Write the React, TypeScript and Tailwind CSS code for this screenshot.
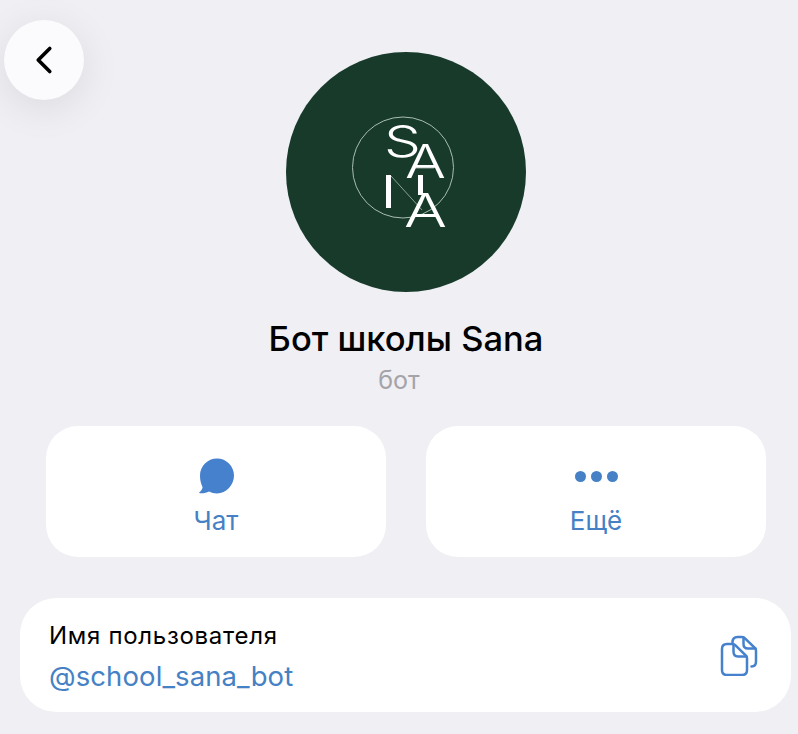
import React from 'react';
import { ChevronLeft } from 'lucide-react';

const SanaLogo = () => (
  <svg viewBox="0 0 150 150" className="w-[150px] h-[150px]" fill="none">
    <g transform="translate(-1 3)">
      <circle cx="73" cy="67.5" r="50.5" stroke="#a9bdb3" strokeWidth="1" />
      <line x1="61" y1="76" x2="92" y2="110" stroke="#a9bdb3" strokeWidth="0.8" />
      <line x1="84" y1="68" x2="104" y2="68" stroke="#a9bdb3" strokeWidth="0.8" />
      <g fill="#ffffff" fontFamily="Inter, sans-serif" fontWeight="300">
        <text x="54" y="57" fontSize="43" textLength="37" lengthAdjust="spacingAndGlyphs">S</text>
        <text x="75" y="78" fontSize="46" textLength="41" lengthAdjust="spacingAndGlyphs">A</text>
        <rect x="56" y="75" width="5" height="33" />
        <rect x="88" y="75" width="5" height="20" />
        <text x="74" y="127" fontSize="47" textLength="43" lengthAdjust="spacingAndGlyphs">A</text>
      </g>
    </g>
  </svg>
);

const ChatIcon = () => (
  <svg viewBox="0 0 36 36" className="w-9 h-9" fill="#4581cc">
    <path d="M19 .5C28.4.5 36 8.1 36 17.5S28.4 35.5 19 35.5c-3 0-5.6-.7-8-2-2.6 1.3-5.6 2-9 1.7-.9-.1-1.1-.6-.6-1 1.7-1.4 2.8-3 3.2-5C2.9 25.7 2 21.8 2 17.5 2 8.1 9.6.5 19 .5z" />
  </svg>
);

const CopyIcon = () => (
  <svg viewBox="0 0 38 41" className="w-[38px] h-[41px]" fill="none" stroke="#4581cc" strokeWidth="2.5" strokeLinecap="round" strokeLinejoin="round">
    <path d="M12.5 7.5C12.5 4 14.3 2 17.5 2H22C23.2 2 24.1 2.4 25 3.3L34.8 12.8C35.7 13.7 36 14.6 36 15.8V26.5C36 29.6 34.4 31.5 31.5 31.5" />
    <path d="M23.5 2.5V9C23.5 11.6 25 13.5 28 13.5H35.5" />
    <path d="M2 14C2 10.8 4 9 7 9H12.5C13.7 9 14.6 9.4 15.5 10.3L25.7 20.3C26.6 21.2 27 22.1 27 23.3V35C27 38.2 25 40 22 40H7C4 40 2 38.2 2 35V14Z" />
    <path d="M13.5 9.5V16.5C13.5 19.6 15.3 21.5 18 21.5H26.5" />
  </svg>
);

const ActionButton: React.FC<{ icon: React.ReactNode; label: string }> = ({ icon, label }) => (
  <div className="w-[340px] h-[131px] bg-white rounded-[32px] flex flex-col items-center pt-[32px]">
    <div className="h-9 flex items-center justify-center">{icon}</div>
    <span className="mt-[12px] text-[26px] leading-[30px] text-[#4581c4]">{label}</span>
  </div>
);

export default function App() {
  return (
    <div
      className="relative w-[798px] h-[734px] overflow-hidden bg-[#efeff4] flex flex-col items-center"
      style={{ fontFamily: 'Inter, "Liberation Sans", Arial, sans-serif' }}
    >
      <button className="absolute left-[4px] top-[20px] w-20 h-20 rounded-full bg-[#fbfbfd] shadow-[0_8px_40px_rgba(0,0,0,0.09)] flex items-center justify-center">
        <ChevronLeft size={46} strokeWidth={1.9} className="text-black" />
      </button>

      <div className="w-[240px] h-[240px] mt-[52px] ml-[14px] rounded-full bg-[#173a2b] flex items-center justify-center shrink-0">
        <SanaLogo />
      </div>

      <h1 className="mt-[26px] ml-[14px] text-[34.5px] leading-[42px] font-medium text-black">Бот школы Sana</h1>
      <p className="mt-[6px] text-[25px] leading-[28px] text-[#a3a3a8]">бот</p>

      <div className="mt-[32px] ml-[14px] flex gap-10">
        <ActionButton icon={<ChatIcon />} label="Чат" />
        <ActionButton
          icon={
            <div className="flex gap-[5px]">
              <span className="w-[11px] h-[11px] rounded-full bg-[#4581c4]" />
              <span className="w-[11px] h-[11px] rounded-full bg-[#4581c4]" />
              <span className="w-[11px] h-[11px] rounded-full bg-[#4581c4]" />
            </div>
          }
          label="Ещё"
        />
      </div>

      <div className="mt-[41px] ml-[13px] w-[771px] h-[114px] bg-white rounded-[36px] flex items-center justify-between pl-[29px] pr-[33px] shrink-0">
        <div className="flex flex-col pt-[3px]">
          <span className="text-[24px] leading-[30px] tracking-[0.7px] text-black">Имя пользователя</span>
          <span className="mt-[9px] text-[27.5px] leading-[32px] tracking-[0.1px] text-[#4581c4]">@school_sana_bot</span>
        </div>
        <CopyIcon />
      </div>
    </div>
  );
}
